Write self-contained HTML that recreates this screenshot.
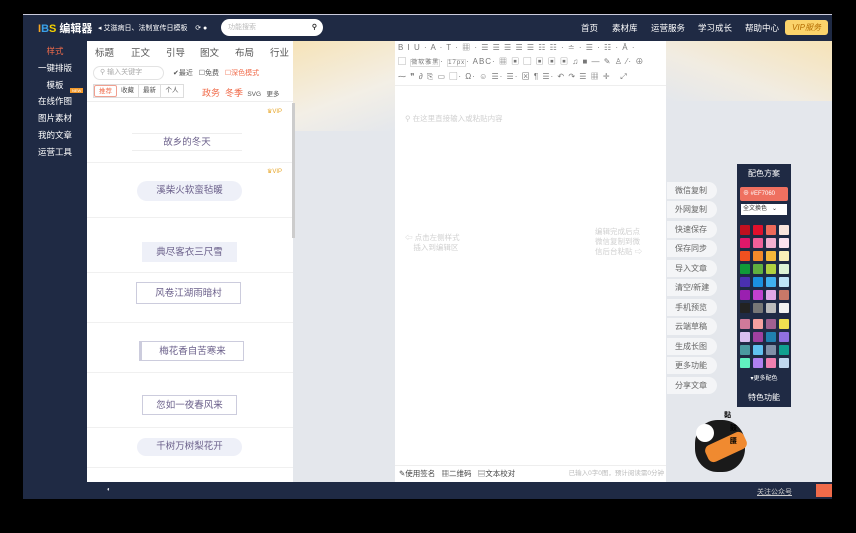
<!DOCTYPE html>
<html><head><meta charset="utf-8"><style>
*{margin:0;padding:0;box-sizing:border-box}
body{width:856px;height:533px;background:#000;font-family:"Liberation Sans","Noto Sans CJK SC",sans-serif;position:relative;overflow:hidden;font-size:9px;color:#333}
.abs{position:absolute}
#top{left:23px;top:14px;width:809px;height:27px;background:#1f2a44;border-top:1px solid #ccd}
#main{left:23px;top:41px;width:809px;height:441px;background:#e4e7ec}
#side{left:23px;top:41px;width:64px;height:441px;background:#1f2a44}
#side div{position:absolute;left:0;width:64px;text-align:center;color:#fff;font-size:8.5px}
#panel{left:87px;top:41px;width:206px;height:441px;background:#fff}
#bottom{left:23px;top:482px;width:809px;height:17px;background:#1f2a44}
#ed{left:395px;top:41px;width:271px;height:441px;background:#fff}
.nav{color:#fff;font-size:8.5px;top:22px}
.tb{color:#555;font-size:9.5px;top:45px}
.card{position:absolute;left:0;width:206px;border-bottom:1px solid #f0f0f0}
.lbl{position:absolute;color:#6a5f8a;font-size:9.5px;text-align:center;background:#eef0f8}
.btn{position:absolute;left:667px;width:50px;height:17px;background:#f4f5f7;border-radius:0 9px 9px 0;color:#666;font-size:8px;line-height:17px;padding-left:8px}
.sw{position:absolute;width:10px;height:10px;border-radius:1px}
.ft{display:inline-block;text-align:center;white-space:nowrap;border-right:1px solid #ddd;height:12px}
</style></head><body>
<div id="top" class="abs"></div>
<div id="main" class="abs"></div>
<div class="abs" style="left:293px;top:41px;width:102px;height:90px;background:linear-gradient(160deg,#f6e3b8,#f3efe6 60%,#e4e7ec)"></div>
<div class="abs" style="left:666px;top:41px;width:166px;height:60px;background:linear-gradient(200deg,#f6e3b8,#f1ece2 60%,#e4e7ec)"></div>
<div id="side" class="abs">
<div style="top:4px;color:#f06b4a">样式</div><div style="top:21px">一键排版</div><div style="top:38px">模板</div><div style="top:54px">在线作图</div><div style="top:71px">图片素材</div><div style="top:88px">我的文章</div><div style="top:105px">运营工具</div>
<span style="position:absolute;left:47px;top:47px;background:#f39a2c;color:#fff;font-size:4px;padding:0 2px">NEW</span>
</div>
<div class="abs" style="left:38px;top:20px;color:#fff;font-size:11px;font-weight:bold"><span style="color:#f5a623">I</span><span style="color:#3aa0e8">B</span><span style="color:#f5d200">S</span> 编辑器</div>
<div class="abs" style="left:98px;top:23px;color:#fff;font-size:7px">◂ 艾滋病日、法制宣传日模板 &nbsp;&nbsp; ⟳ ●</div>
<div class="abs" style="left:221px;top:19px;width:102px;height:17px;background:#fff;border-radius:9px;color:#bbb;font-size:7px;line-height:17px;padding-left:7px">功能搜索<span style="position:absolute;right:6px;color:#333;font-weight:bold">⚲</span></div>
<div class="abs nav" style="left:581px">首页</div><div class="abs nav" style="left:612px">素材库</div><div class="abs nav" style="left:651px">运营服务</div><div class="abs nav" style="left:698px">学习成长</div><div class="abs nav" style="left:745px">帮助中心</div>
<div class="abs" style="left:785px;top:20px;width:43px;height:15px;background:#fbd36b;border-radius:3px;color:#b36b00;font-size:8px;line-height:15px;text-align:center;font-style:italic">VIP服务</div>
<div id="panel" class="abs">
<div style="position:absolute;left:0;top:0;width:206px;height:61px;border-bottom:1px solid #eee"></div>
<div class="abs tb" style="left:8px;top:4px">标题</div><div class="abs tb" style="left:44px;top:4px">正文</div><div class="abs tb" style="left:79px;top:4px">引导</div><div class="abs tb" style="left:113px;top:4px">图文</div><div class="abs tb" style="left:148px;top:4px">布局</div><div class="abs tb" style="left:183px;top:4px">行业</div>
<div class="abs" style="left:6px;top:25px;width:71px;height:14px;border:1px solid #e3e3e3;border-radius:7px;color:#aaa;font-size:7px;line-height:12px;padding-left:6px">⚲ 输入关键字</div>
<div class="abs" style="left:86px;top:27px;font-size:7px;color:#555">✔最近 &nbsp;&nbsp;☐免费 &nbsp;&nbsp;<span style="color:#f06b4a">☐深色模式</span></div>
<div class="abs" style="left:6px;top:43px;width:91px;height:14px;border:1px solid #ddd;font-size:6.5px;line-height:12px;color:#555;display:flex"><span class="ft" style="width:23px;color:#f06b4a;border:1px solid #f0a090;border-radius:2px">推荐</span><span class="ft" style="width:22px">收藏</span><span class="ft" style="width:22px">最新</span><span class="ft" style="width:22px;border:none">个人</span></div>
<div class="abs" style="left:115px;top:45px;font-size:9px;color:#f06b4a;white-space:nowrap">政务 &nbsp;冬季 <span style="font-size:6.5px;color:#555">&nbsp;SVG &nbsp;&nbsp;更多</span></div>
<div class="card" style="top:62px;height:60px"><div class="lbl" style="left:45px;top:30px;width:110px;height:18px;line-height:18px;background:#fff;border-top:1px solid #eee;border-bottom:1px solid #eee">故乡的冬天</div><span class="abs" style="left:180px;top:5px;color:#e7a72c;font-size:6px">♛VIP</span></div>
<div class="card" style="top:122px;height:55px"><div class="lbl" style="left:50px;top:18px;width:105px;height:20px;line-height:20px;border-radius:10px">溪柴火软蛮毡暖</div><span class="abs" style="left:180px;top:5px;color:#e7a72c;font-size:6px">♛VIP</span></div>
<div class="card" style="top:177px;height:55px"><div class="lbl" style="left:55px;top:24px;width:95px;height:20px;line-height:22px">典尽客衣三尺雪</div></div>
<div class="card" style="top:232px;height:50px"><div class="lbl" style="left:49px;top:9px;width:105px;height:22px;line-height:22px;background:#fff;border:1px solid #ccd">风卷江湖雨暗村</div></div>
<div class="card" style="top:282px;height:50px"><div class="lbl" style="left:52px;top:18px;width:105px;height:20px;line-height:20px;background:#fff;border:1px solid #ccd;border-left:3px solid #ccd">梅花香自苦寒来</div></div>
<div class="card" style="top:332px;height:55px"><div class="lbl" style="left:55px;top:22px;width:95px;height:20px;line-height:20px;background:#fff;border:1px solid #ccd">忽如一夜春风来</div></div>
<div class="card" style="top:387px;height:40px"><div class="lbl" style="left:50px;top:10px;width:105px;height:18px;line-height:18px;border-radius:9px">千树万树梨花开</div></div>
<div class="abs" style="left:205px;top:62px;width:3px;height:135px;background:#ccc"></div>
</div>
<div id="ed" class="abs">
<div class="abs" style="left:0;top:0;width:271px;height:45px;border-bottom:1px solid #eee;color:#777;font-size:8px;line-height:14px;padding-left:3px;white-space:nowrap;overflow:hidden;letter-spacing:1px">B I U · A · T · ▦ · ☰ ☰ ☰ ☰ ☰ ☷ ☷ · ≐ · ☰ · ☷ · Ā ·<br>▢ <span style="border:1px solid #ddd;font-size:6px">微软雅黑</span>· <span style="border:1px solid #ddd;font-size:6px">17px</span>· ABC· ▦ ▣ ▢ ▣ ▣ ▣ ♫ ■ — ✎ ♙ ⁄· ⊕<br>⁓ ❞ ∂ ⎘ ▭ ▢· Ω· ☺ ☰· ☰· ⊠ ¶ ☰· ↶ ↷ ☰ ▦ ✛ &nbsp; ⤢</div>
<div class="abs" style="left:10px;top:72px;color:#d0d0d0;font-size:7.5px">⚲ 在这里直接输入或粘贴内容</div>
<div class="abs" style="left:10px;top:192px;color:#d0d0d0;font-size:7.5px;line-height:10px">⇦ 点击左侧样式<br>&nbsp;&nbsp;&nbsp;&nbsp;插入到编辑区</div>
<div class="abs" style="left:200px;top:186px;color:#d0d0d0;font-size:7.5px;line-height:10px">编辑完成后点<br>微信复制到微<br>信后台粘贴 ⇨</div>
<div class="abs" style="left:0;top:424px;width:271px;height:17px;border-top:1px solid #eee;font-size:7.5px;line-height:16px;padding-left:4px;color:#444">✎使用签名 &nbsp;&nbsp;▦二维码 &nbsp;&nbsp;▤文本校对<span style="position:absolute;right:2px;color:#bbb;font-size:6.5px">已输入0字0图，预计阅读需0分钟</span></div>
</div>
<div class="btn" style="top:182px">微信复制</div><div class="btn" style="top:201px">外网复制</div><div class="btn" style="top:221px">快速保存</div><div class="btn" style="top:240px">保存同步</div><div class="btn" style="top:260px">导入文章</div><div class="btn" style="top:279px">清空/新建</div><div class="btn" style="top:299px">手机预览</div><div class="btn" style="top:318px">云端草稿</div><div class="btn" style="top:338px">生成长图</div><div class="btn" style="top:357px">更多功能</div><div class="btn" style="top:377px">分享文章</div>
<div class="abs" style="left:737px;top:164px;width:54px;height:243px;background:#1f2a44">
<div class="abs" style="left:0;top:4px;width:54px;text-align:center;color:#fff;font-size:8px">配色方案</div>
<div class="abs" style="left:3px;top:23px;width:48px;height:14px;background:#ef7060;border-radius:2px;color:#fff;font-size:6px;line-height:14px;padding-left:3px">⊕ #EF7060</div>
<div class="abs" style="left:4px;top:40px;width:46px;height:11px;background:#fff;font-size:6px;line-height:11px;padding-left:2px">全文换色 &nbsp;&nbsp;⌄</div>
<div class="sw" style="left:3px;top:61px;background:#c0101f"></div><div class="sw" style="left:16px;top:61px;background:#e0102c"></div><div class="sw" style="left:29px;top:61px;background:#ef6a5a"></div><div class="sw" style="left:42px;top:61px;background:#fae6dd"></div>
<div class="sw" style="left:3px;top:74px;background:#e0186a"></div><div class="sw" style="left:16px;top:74px;background:#f0609a"></div><div class="sw" style="left:29px;top:74px;background:#f4b0d0"></div><div class="sw" style="left:42px;top:74px;background:#fbe2ee"></div>
<div class="sw" style="left:3px;top:87px;background:#f05020"></div><div class="sw" style="left:16px;top:87px;background:#f58a2a"></div><div class="sw" style="left:29px;top:87px;background:#f8b83a"></div><div class="sw" style="left:42px;top:87px;background:#fbf0b8"></div>
<div class="sw" style="left:3px;top:100px;background:#109a38"></div><div class="sw" style="left:16px;top:100px;background:#60b040"></div><div class="sw" style="left:29px;top:100px;background:#b0d040"></div><div class="sw" style="left:42px;top:100px;background:#ddf2d6"></div>
<div class="sw" style="left:3px;top:113px;background:#4a30b0"></div><div class="sw" style="left:16px;top:113px;background:#1a90e0"></div><div class="sw" style="left:29px;top:113px;background:#40b0f0"></div><div class="sw" style="left:42px;top:113px;background:#bfe4f8"></div>
<div class="sw" style="left:3px;top:126px;background:#9a20b0"></div><div class="sw" style="left:16px;top:126px;background:#c040d0"></div><div class="sw" style="left:29px;top:126px;background:#e0a8e8"></div><div class="sw" style="left:42px;top:126px;background:#c87868"></div>
<div class="sw" style="left:3px;top:139px;background:#222"></div><div class="sw" style="left:16px;top:139px;background:#777"></div><div class="sw" style="left:29px;top:139px;background:#bbb"></div><div class="sw" style="left:42px;top:139px;background:#f2f2f2"></div>
<div class="sw" style="left:3px;top:155px;background:#d07a9a"></div><div class="sw" style="left:16px;top:155px;background:#f4a0a0"></div><div class="sw" style="left:29px;top:155px;background:#a06090"></div><div class="sw" style="left:42px;top:155px;background:#f0e050"></div>
<div class="sw" style="left:3px;top:168px;background:#d8c0f0"></div><div class="sw" style="left:16px;top:168px;background:#a040a0"></div><div class="sw" style="left:29px;top:168px;background:#2080b0"></div><div class="sw" style="left:42px;top:168px;background:#9070e0"></div>
<div class="sw" style="left:3px;top:181px;background:#4a9aa0"></div><div class="sw" style="left:16px;top:181px;background:#60c0f0"></div><div class="sw" style="left:29px;top:181px;background:#8090a8"></div><div class="sw" style="left:42px;top:181px;background:#10a090"></div>
<div class="sw" style="left:3px;top:194px;background:#60f0c0"></div><div class="sw" style="left:16px;top:194px;background:#b080f0"></div><div class="sw" style="left:29px;top:194px;background:#f080b0"></div><div class="sw" style="left:42px;top:194px;background:#c0d8f0"></div>
<div class="abs" style="left:0;top:209px;width:54px;text-align:center;color:#fff;font-size:6px">▾更多配色</div>
<div class="abs" style="left:0;top:228px;width:54px;text-align:center;color:#fff;font-size:8px">特色功能</div>
</div>
<div class="abs" style="left:695px;top:420px;width:50px;height:52px;border-radius:45%;background:#1a1a1a"></div>
<div class="abs" style="left:705px;top:438px;width:42px;height:18px;background:#f08a30;transform:rotate(-25deg);border-radius:6px"></div>
<div class="abs" style="left:696px;top:424px;width:18px;height:18px;border-radius:50%;background:#fff"></div>
<div class="abs" style="left:724px;top:409px;font-size:7px;color:#000;font-weight:bold;line-height:13px">黏<br>&nbsp;&nbsp;&nbsp;鼓<br>&nbsp;&nbsp;&nbsp;腰</div>
<div id="bottom" class="abs"></div>
<div class="abs" style="left:107px;top:487px;color:#fff;font-size:6px">◐</div>
<div class="abs" style="left:757px;top:487px;color:#ccc;font-size:7px;text-decoration:underline">关注公众号</div>
<div class="abs" style="left:816px;top:484px;width:16px;height:13px;background:#f06b4a"></div>
</body></html>
